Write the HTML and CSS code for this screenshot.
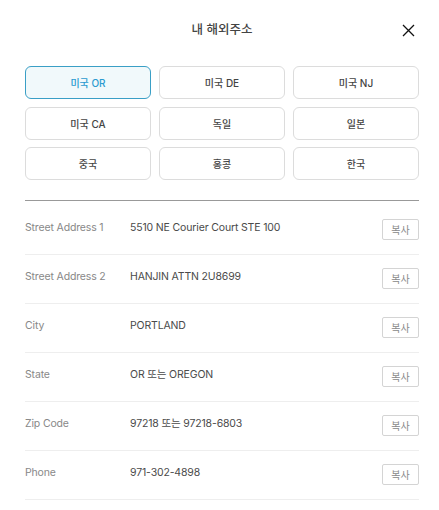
FILE: index.html
```html
<!DOCTYPE html>
<html lang="ko">
<head>
<meta charset="utf-8">
<link rel="stylesheet" href="styles.css">
</head>
<body>
<div class="modal">
  <header class="head">
    <h1 class="title">내 해외주소</h1>
    <button class="close" aria-label="닫기">
      <svg width="13" height="13" viewBox="0 0 13 13"><path d="M1 1L12 12M12 1L1 12" stroke="#111" stroke-width="1.3" fill="none"/></svg>
    </button>
  </header>
  <div class="tabs">
    <button class="tab active">미국 OR</button>
    <button class="tab">미국 DE</button>
    <button class="tab">미국 NJ</button>
    <button class="tab">미국 CA</button>
    <button class="tab">독일</button>
    <button class="tab">일본</button>
    <button class="tab">중국</button>
    <button class="tab">홍콩</button>
    <button class="tab">한국</button>
  </div>
  <hr class="divider">
  <ul class="list">
    <li class="row"><span class="label">Street Address 1</span><span class="value">5510 NE Courier Court STE 100</span><button class="copy">복사</button></li>
    <li class="row"><span class="label">Street Address 2</span><span class="value">HANJIN ATTN 2U8699</span><button class="copy">복사</button></li>
    <li class="row"><span class="label">City</span><span class="value">PORTLAND</span><button class="copy">복사</button></li>
    <li class="row"><span class="label">State</span><span class="value">OR 또는 OREGON</span><button class="copy">복사</button></li>
    <li class="row"><span class="label">Zip Code</span><span class="value">97218 또는 97218-6803</span><button class="copy">복사</button></li>
    <li class="row"><span class="label">Phone</span><span class="value">971-302-4898</span><button class="copy">복사</button></li>
  </ul>
</div>
</body>
</html>
```
FILE: styles.css
```css
* { box-sizing: border-box; }
html, body { margin: 0; padding: 0; background: #fff; }
body {
  font-family: Inter, "Noto Sans CJK KR", sans-serif;
  color: #444;
}
.modal {
  width: 439px;
  padding: 0 20px 0 25px;
}
.head {
  position: relative;
  height: 66px;
  display: flex;
  align-items: flex-start;
  justify-content: center;
  padding-top: 21px;
}
.title {
  margin: 0;
  font-size: 12.5px;
  font-weight: 500;
  line-height: 18px;
  color: #444;
}
.close {
  position: absolute;
  right: 3px;
  top: 23px;
  width: 15px;
  height: 15px;
  padding: 0;
  border: 0;
  background: none;
  display: flex;
  align-items: center;
  justify-content: center;
}
.tabs {
  display: grid;
  grid-template-columns: repeat(3, 126px);
  column-gap: 8px;
  row-gap: 7.5px;
}
.tab {
  height: 33px;
  border: 1px solid #dcdcdc;
  border-radius: 6px;
  background: #fff;
  font-family: Inter, "Noto Sans CJK KR", sans-serif;
  font-size: 10px;
  font-weight: 500;
  color: #444;
  padding: 0;
}
.tab.active {
  background: #f1f9fb;
  border-color: #3a9fc6;
  color: #2b9bd0;
}
.divider {
  margin: 20px 0 5px;
  border: 0;
  border-top: 1px solid #999;
  height: 0;
}
.list {
  list-style: none;
  margin: 0;
  padding: 0;
}
.row {
  display: flex;
  align-items: flex-start;
  padding: 13px 0 14px;
  border-bottom: 1px solid #eee;
  font-size: 10.5px;
  letter-spacing: -0.15px;
  line-height: 17px;
}
.label {
  width: 105px;
  color: #888;
}
.value {
  flex: 1;
  color: #4a4a4a;
}
.copy {
  width: 37px;
  height: 21px;
  padding: 0;
  border: 1px solid #d4d4d4;
  border-radius: 2px;
  background: #fff;
  font-family: Inter, "Noto Sans CJK KR", sans-serif;
  font-size: 10px;
  letter-spacing: 0;
  color: #888;
}
```
